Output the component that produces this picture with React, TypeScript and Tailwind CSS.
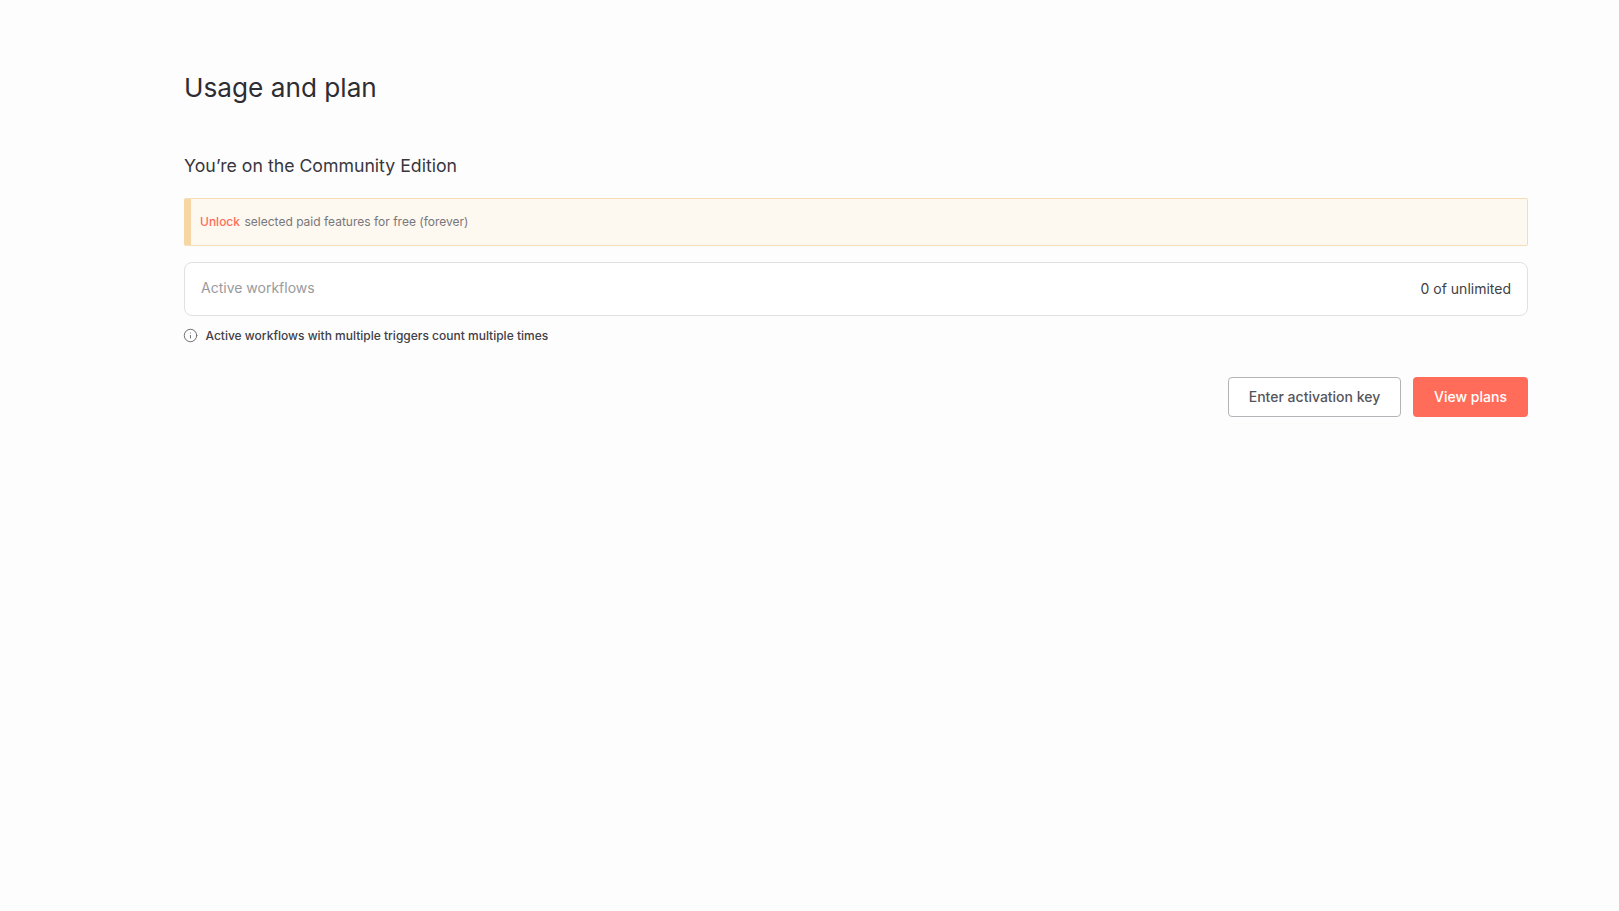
import { Info } from 'lucide-react';

export default function App() {
  return (
    <div className="min-h-[911px] bg-[#fefdfd] pr-[91px] pl-[184px] pt-[70px] font-['Inter',sans-serif] text-[#2d2d33]">
      <h1 className="text-[26.2px] leading-[36px] font-normal">Usage and plan</h1>

      <h2 className="mt-[48px] text-[17.7px] leading-[24px] font-normal text-[#37373d]">You’re on the Community Edition</h2>

      <div className="mt-[20px] flex h-[48px] items-center rounded-[2px] border border-[#f6dcb5] border-l-[7px] border-l-[#f6d6a4] bg-[#fdf8f0] pl-[9px] text-[12px]">
        <a className="font-medium text-[#ff6d5a]">Unlock</a>
        <span className="ml-[4.5px] text-[#77777c]">selected paid features for free (forever)</span>
      </div>

      <div className="mt-[16px] flex h-[54px] items-center justify-between rounded-[8px] border border-[#e0e0e2] bg-white px-[16px]">
        <span className="pb-[3px] text-[14px] text-[#9a9a9e]">Active workflows</span>
        <span className="pb-[1px] text-[14px] text-[#404046]">0 of unlimited</span>
      </div>

      <div className="mt-[11px] flex items-center gap-[7.5px] text-[12px] font-medium text-[#404046]">
        <Info className="-mt-[1px] -ml-[1px] h-[15px] w-[15px] text-[#66666c]" strokeWidth={1.5} />
        <span>Active workflows with multiple triggers count multiple times</span>
      </div>

      <div className="mt-[32px] flex justify-end gap-[12px]">
        <button className="h-[40px] w-[173px] rounded-[4px] border border-[#b4b4b8] bg-white pb-[1px] text-[14px] font-medium text-[#55555b]" type="button">
          Enter activation key
        </button>
        <button className="h-[40px] w-[115px] rounded-[4px] bg-[#ff6d5a] pb-[1px] text-[14px] font-medium text-white" type="button">
          View plans
        </button>
      </div>
    </div>
  );
}
